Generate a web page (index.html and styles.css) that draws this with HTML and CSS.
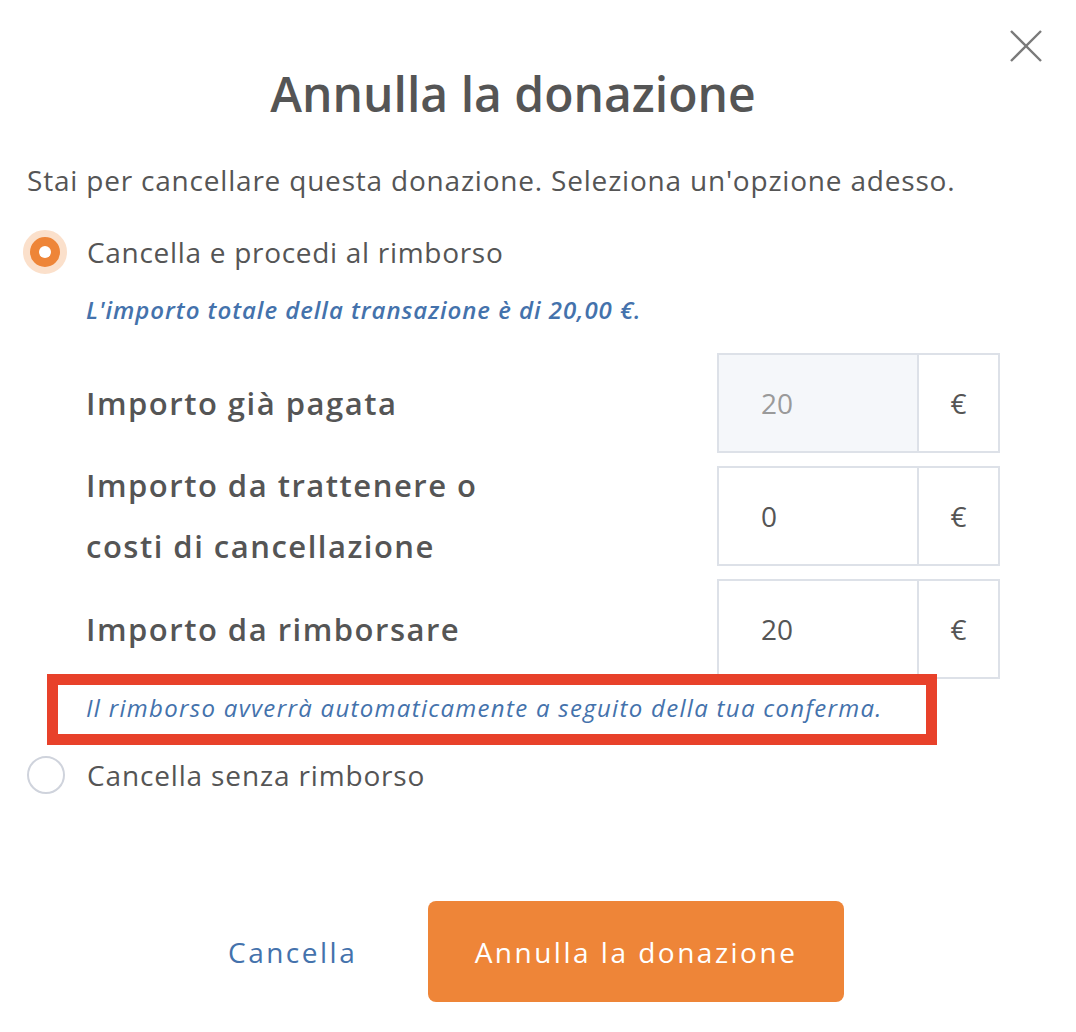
FILE: index.html
```html
<!DOCTYPE html>
<html lang="it">
<head>
<meta charset="utf-8">
<link rel="stylesheet" href="styles.css">
</head>
<body>
<div class="modal">
  <button class="close" aria-label="Chiudi">
    <svg width="34" height="34" viewBox="0 0 34 34"><path d="M2 2 L32 32 M32 2 L2 32" stroke="#7a7a7a" stroke-width="2.4" fill="none"/></svg>
  </button>
  <h1 class="title">Annulla la donazione</h1>
  <p class="desc">Stai per cancellare questa donazione. Seleziona un'opzione adesso.</p>

  <div class="option">
    <span class="radio checked"><span class="dot"></span></span>
    <span class="option-label">Cancella e procedi al rimborso</span>
  </div>
  <div class="details">
    <p class="total">L'importo totale della transazione è di 20,00 €.</p>
    <div class="rows">
      <div class="row">
        <div class="row-label">Importo già pagata</div>
        <div class="group">
          <div class="input disabled">20</div>
          <div class="addon">€</div>
        </div>
      </div>
      <div class="row">
        <div class="row-label">Importo da trattenere o<br>costi di cancellazione</div>
        <div class="group">
          <div class="input">0</div>
          <div class="addon">€</div>
        </div>
      </div>
      <div class="row">
        <div class="row-label">Importo da rimborsare</div>
        <div class="group">
          <div class="input">20</div>
          <div class="addon">€</div>
        </div>
      </div>
    </div>
    <div class="note-wrap">
      <p class="note">Il rimborso avverrà automaticamente a seguito della tua conferma.</p>
      <div class="highlight"></div>
    </div>
  </div>

  <div class="option second">
    <span class="radio"></span>
    <span class="option-label">Cancella senza rimborso</span>
  </div>

  <div class="actions">
    <button class="link">Cancella</button>
    <button class="primary">Annulla la donazione</button>
  </div>
</div>
</body>
</html>
```
FILE: styles.css
```css
* { box-sizing: border-box; }
html, body { margin: 0; padding: 0; background: #fff; }
body {
  font-family: "Open Sans", Lato, sans-serif;
  color: #555;
}
.modal {
  position: relative;
  width: 1076px;
  height: 1032px;
  padding: 0 77px 0 27px;
}
.close {
  position: absolute;
  top: 29px;
  right: 33px;
  width: 34px;
  height: 34px;
  padding: 0;
  border: 0;
  background: none;
}
.title {
  margin: 0;
  padding-top: 64px;
  text-align: center;
  font-size: 48px;
  line-height: 60px;
  font-weight: 600;
  color: #555;
}
.desc {
  margin: 36px 0 0;
  font-size: 28px;
  line-height: 40px;
  letter-spacing: 0.8px;
  color: #555;
}
.option {
  display: flex;
  align-items: center;
  height: 44px;
  margin-top: 30px;
}
.option.second {
  margin-top: 30px;
  height: 40px;
}
.radio {
  flex: none;
  width: 38px;
  height: 38px;
  margin-left: 0;
  margin-right: 22px;
  border: 2px solid #cfd3dc;
  border-radius: 50%;
  display: flex;
  align-items: center;
  justify-content: center;
}
.radio.checked {
  width: 44px;
  height: 44px;
  margin-left: -4px;
  margin-right: 20px;
  border: 7px solid #fbe0cb;
  background: #ee8538;
}
.radio .dot {
  width: 12px;
  height: 12px;
  border-radius: 50%;
  background: #fff;
}
.option-label {
  font-size: 28px;
  line-height: 40px;
  letter-spacing: 0.7px;
  color: #555;
}
.option.second .option-label {
  letter-spacing: 0.85px;
}
.details {
  padding-left: 59px;
}
.total {
  margin: 19px 0 0;
  font-size: 24px;
  line-height: 34px;
  font-style: italic;
  font-weight: 600;
  letter-spacing: 0.95px;
  color: #4472ac;
}
.rows {
  display: flex;
  flex-direction: column;
  gap: 13px;
  margin-top: 26px;
}
.row {
  display: flex;
  align-items: center;
  justify-content: space-between;
  height: 100px;
}
.row-label {
  font-size: 31px;
  line-height: 61px;
  font-weight: 600;
  letter-spacing: 1.5px;
  color: #555;
}
.group {
  display: flex;
  width: 283px;
  height: 100px;
  margin-right: -1px;
  border: 2px solid #dde1e8;
}
.input {
  width: 198px;
  display: flex;
  align-items: center;
  padding-left: 42px;
  font-size: 28px;
  color: #555;
  background: #fff;
}
.input.disabled {
  background: #f5f7fa;
  color: #9a9a9a;
}
.addon {
  flex: 1;
  display: flex;
  align-items: center;
  justify-content: center;
  border-left: 2px solid #dde1e8;
  font-size: 28px;
  color: #555;
}
.note-wrap {
  position: relative;
}
.note {
  margin: 12px 0 0;
  font-size: 24px;
  line-height: 34px;
  font-style: italic;
  letter-spacing: 1.3px;
  color: #4472ac;
}
.highlight {
  position: absolute;
  left: -39px;
  top: -17px;
  width: 890px;
  height: 71px;
  border: 11px solid #e8412a;
}
.actions {
  display: flex;
  align-items: center;
  margin-top: 106px;
  padding-left: 201px;
}
.link {
  border: 0;
  background: none;
  padding: 0;
  width: 200px;
  font-family: inherit;
  font-size: 28px;
  letter-spacing: 2.5px;
  color: #4472ac;
  text-align: left;
}
.primary {
  width: 416px;
  height: 101px;
  border: 0;
  border-radius: 8px;
  background: #ee8538;
  color: #fff;
  font-family: inherit;
  font-size: 28px;
  letter-spacing: 2.5px;
}
```
